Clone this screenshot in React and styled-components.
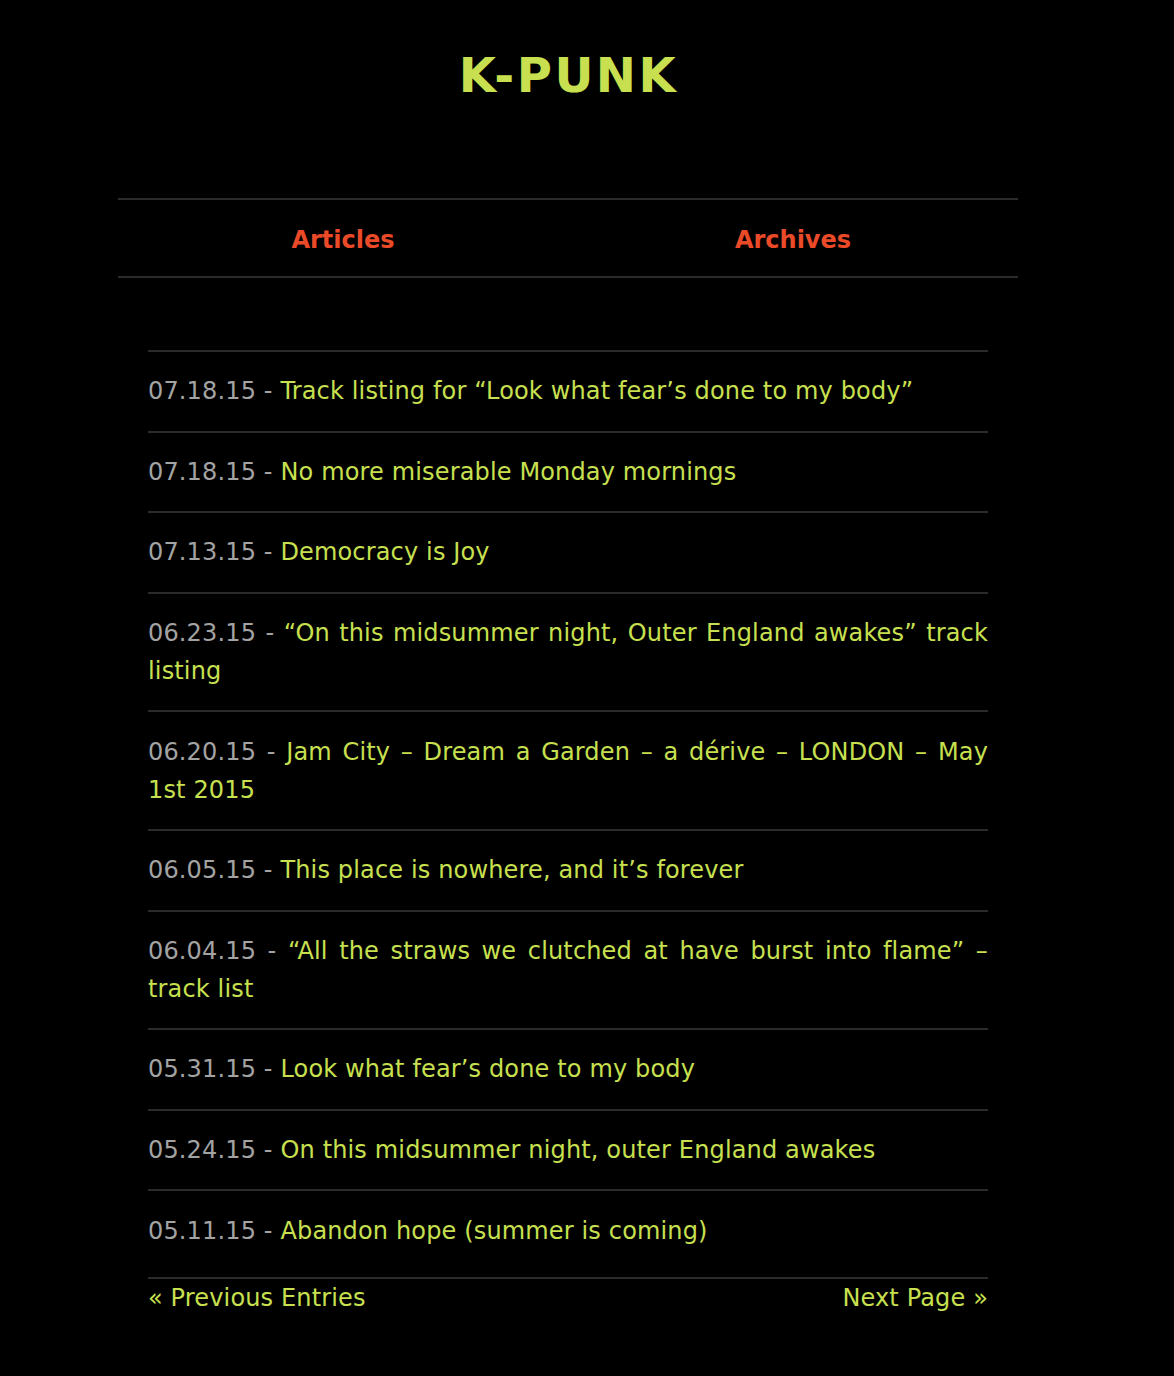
import React from "react";
import styled, { createGlobalStyle } from "styled-components";

const posts = [
  { date: "07.18.15", title: "Track listing for “Look what fear’s done to my body”" },
  { date: "07.18.15", title: "No more miserable Monday mornings" },
  { date: "07.13.15", title: "Democracy is Joy" },
  { date: "06.23.15", title: "“On this midsummer night, Outer England awakes” track listing" },
  { date: "06.20.15", title: "Jam City – Dream a Garden – a dérive – LONDON – May 1st 2015" },
  { date: "06.05.15", title: "This place is nowhere, and it’s forever" },
  { date: "06.04.15", title: "“All the straws we clutched at have burst into flame” – track list" },
  { date: "05.31.15", title: "Look what fear’s done to my body" },
  { date: "05.24.15", title: "On this midsummer night, outer England awakes" },
  { date: "05.11.15", title: "Abandon hope (summer is coming)" },
];

const App = () => {
  return (
    <>
      <GlobalStyle />
      <Page>
        <Header>
          <Title>K-PUNK</Title>
        </Header>

        <Nav>
          <NavLink href="#">Articles</NavLink>
          <NavLink href="#">Archives</NavLink>
        </Nav>

        <Main>
          <PostList>
            {posts.map((post, i) => (
              <Post key={i}>
                <PostDate>{post.date} - </PostDate>
                <PostLink href="#">{post.title}</PostLink>
              </Post>
            ))}
          </PostList>

          <Pager>
            <PagerLink href="#">« Previous Entries</PagerLink>
            <PagerLink href="#">Next Page »</PagerLink>
          </Pager>
        </Main>
      </Page>
    </>
  );
};

export default App;

//styling
const GlobalStyle = createGlobalStyle`
  html, body {
    margin: 0;
    padding: 0;
    background: #000;
  }
  body {
    font-family: "DejaVu Sans", Verdana, sans-serif;
    color: #a0a0a0;
  }
`;

const Page = styled.div`
  width: 1136px;
  padding-bottom: 52px;
`;

const Header = styled.header`
  padding-top: 44px;
  height: 198px;
  box-sizing: border-box;
  text-align: center;
`;

const Title = styled.h1`
  margin: 0;
  font-size: 48px;
  line-height: 62px;
  font-weight: bold;
  letter-spacing: 2.5px;
  padding-left: 1px;
  color: #c8e04f;
`;

const Nav = styled.nav`
  width: 900px;
  margin: 0 auto;
  display: grid;
  grid-template-columns: 1fr 1fr;
  border-top: 2px solid #2b2b2b;
  border-bottom: 2px solid #2b2b2b;
  height: 80px;
  box-sizing: border-box;
  align-items: center;
`;

const NavLink = styled.a`
  text-align: center;
  padding-top: 4px;
  font-size: 24px;
  font-weight: bold;
  color: #ea4a28;
  text-decoration: none;
`;

const Main = styled.main`
  width: 840px;
  margin: 72px auto 0;
`;

const PostList = styled.ul`
  list-style: none;
  margin: 0;
  padding: 0;
  border-top: 2px solid #2b2b2b;
`;

const Post = styled.li`
  padding: 20.3px 0;
  font-size: 24px;
  line-height: 38px;
  letter-spacing: 0.15px;
  text-align: justify;
  border-bottom: 2px solid #2b2b2b;

  &:last-child {
    padding-bottom: 27px;
  }
`;

const PostDate = styled.span`
  color: #a3a3a3;
`;

const PostLink = styled.a`
  color: #c8e04f;
  text-decoration: none;
`;

const Pager = styled.div`
  display: flex;
  justify-content: space-between;
  font-size: 24px;
  line-height: 38px;
  letter-spacing: 0.15px;
`;

const PagerLink = styled.a`
  color: #c8e04f;
  text-decoration: none;
`;
